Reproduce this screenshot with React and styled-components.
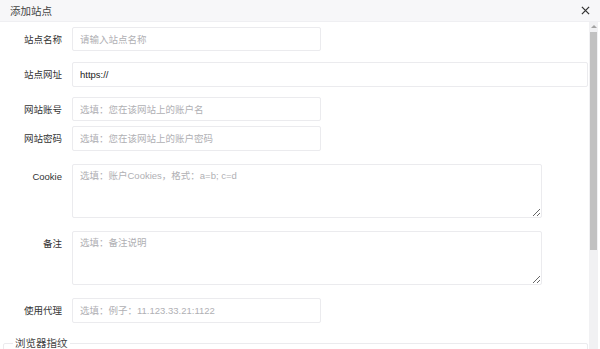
import React from "react";
import styled, { createGlobalStyle } from "styled-components";

const Global = createGlobalStyle`
  html, body { margin: 0; padding: 0; background: #fff; }
  body { font-family: "Liberation Sans", "Noto Sans CJK SC", sans-serif; overflow: hidden; }
  * { box-sizing: border-box; }
`;

const Dialog = styled.div`
  width: 600px;
  height: 349px;
  display: flex;
  flex-direction: column;
  background: #fff;
  overflow: hidden;
`;

const Header = styled.div`
  height: 22px;
  flex: none;
  display: flex;
  align-items: center;
  justify-content: space-between;
  padding: 0 9px 0 10px;
  background: #f7f7f9;
  border-bottom: 1px solid #efeff2;
  font-size: 10.5px;
  color: #444;
`;

const Close = styled.button`
  border: 0;
  background: transparent;
  padding: 0;
  width: 12px;
  height: 12px;
  display: flex;
  align-items: center;
  justify-content: center;
  cursor: pointer;
`;

const Body = styled.div`
  flex: 1;
  display: flex;
  min-height: 0;
`;

const Content = styled.div`
  flex: 1;
  padding: 0 1px 0 3px;
  overflow: hidden;
`;

const Row = styled.div`
  display: flex;
  align-items: flex-start;
  gap: 10px;
  margin-top: ${(p) => p.$mt}px;
`;

const Label = styled.label`
  width: 59px;
  flex: none;
  text-align: right;
  font-size: 9.5px;
  color: #333;
  line-height: ${(p) => (p.$area ? "26px" : "25px")};
`;

const Input = styled.input`
  height: ${(p) => p.$h || 25}px;
  width: ${(p) => (p.$wide ? "auto" : "249px")};
  flex: ${(p) => (p.$wide ? 1 : "none")};
  border: 1px solid #ebebee;
  border-radius: 2px;
  padding: 0 7px;
  font-family: inherit;
  font-size: 9.5px;
  color: #222;
  background: #fff;
  outline: none;
  &::placeholder { color: #b0b0b4; }
`;

const Area = styled.textarea`
  width: 470px;
  height: 54px;
  flex: none;
  border: 1px solid #ebebee;
  border-radius: 2px;
  padding: 3px 7px;
  font-family: inherit;
  font-size: 9.5px;
  color: #222;
  resize: both;
  outline: none;
  &::placeholder { color: #b0b0b4; }
`;

const Fieldset = styled.fieldset`
  margin: 14px 0 0 0;
  border: 1px solid #ebebee;
  border-radius: 2px;
  padding: 0 10px;
  min-height: 30px;
`;

const Legend = styled.legend`
  font-size: 10.5px;
  color: #444;
  padding: 0 2px;
  margin-left: -1px;
  line-height: 12px;
`;

const Scrollbar = styled.div`
  width: 9px;
  flex: none;
  margin-right: 2px;
  background: #f1f1f3;
  display: flex;
  flex-direction: column;
  align-items: center;
  padding-top: 3px;
`;

const Arrow = styled.div`
  width: 0;
  height: 0;
  border-left: 3px solid transparent;
  border-right: 3px solid transparent;
  border-bottom: 3px solid #a3a3a3;
  margin-bottom: 4px;
`;

const Thumb = styled.div`
  width: 7px;
  height: 218px;
  background: #c1c1c1;
`;

export default function App() {
  return (
    <>
      <Global />
      <Dialog>
        <Header>
          <span>添加站点</span>
          <Close aria-label="close">
            <svg width="9" height="9" viewBox="0 0 10 10">
              <path d="M1 1L9 9M9 1L1 9" stroke="#333" strokeWidth="1.4" />
            </svg>
          </Close>
        </Header>
        <Body>
          <Content>
            <Row $mt={5}>
              <Label>站点名称</Label>
              <Input $h={24} placeholder="请输入站点名称" />
            </Row>
            <Row $mt={10}>
              <Label>站点网址</Label>
              <Input $wide defaultValue="https://" />
            </Row>
            <Row $mt={10}>
              <Label>网站账号</Label>
              <Input $h={24} placeholder="选填：您在该网站上的账户名" />
            </Row>
            <Row $mt={4}>
              <Label>网站密码</Label>
              <Input placeholder="选填：您在该网站上的账户密码" />
            </Row>
            <Row $mt={13}>
              <Label $area>Cookie</Label>
              <Area placeholder="选填：账户Cookies，格式：a=b; c=d" />
            </Row>
            <Row $mt={13}>
              <Label $area>备注</Label>
              <Area placeholder="选填：备注说明" />
            </Row>
            <Row $mt={13}>
              <Label>使用代理</Label>
              <Input placeholder="选填：例子：11.123.33.21:1122" />
            </Row>
            <Fieldset>
              <Legend>浏览器指纹</Legend>
            </Fieldset>
          </Content>
          <Scrollbar>
            <Arrow />
            <Thumb />
          </Scrollbar>
        </Body>
      </Dialog>
    </>
  );
}
